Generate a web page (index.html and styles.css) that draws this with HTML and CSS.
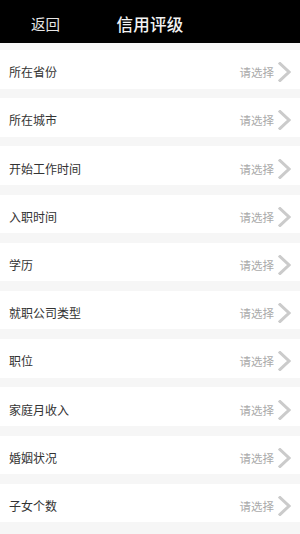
FILE: index.html
```html
<!DOCTYPE html>
<html lang="zh">
<head>
<meta charset="utf-8">
<link rel="stylesheet" href="styles.css">
</head>
<body>
<header class="bar">
  <span class="back">返回</span>
  <span class="title">信用评级</span>
</header>
<ul class="list">
  <li class="row"><span class="label">所在省份</span><span class="pick">请选择<svg class="chev" viewBox="0 0 13 20"><path d="M2 1.5 L11 10 L2 18.5" /></svg></span></li>
  <li class="row"><span class="label">所在城市</span><span class="pick">请选择<svg class="chev" viewBox="0 0 13 20"><path d="M2 1.5 L11 10 L2 18.5" /></svg></span></li>
  <li class="row"><span class="label">开始工作时间</span><span class="pick">请选择<svg class="chev" viewBox="0 0 13 20"><path d="M2 1.5 L11 10 L2 18.5" /></svg></span></li>
  <li class="row"><span class="label">入职时间</span><span class="pick">请选择<svg class="chev" viewBox="0 0 13 20"><path d="M2 1.5 L11 10 L2 18.5" /></svg></span></li>
  <li class="row"><span class="label">学历</span><span class="pick">请选择<svg class="chev" viewBox="0 0 13 20"><path d="M2 1.5 L11 10 L2 18.5" /></svg></span></li>
  <li class="row"><span class="label">就职公司类型</span><span class="pick">请选择<svg class="chev" viewBox="0 0 13 20"><path d="M2 1.5 L11 10 L2 18.5" /></svg></span></li>
  <li class="row"><span class="label">职位</span><span class="pick">请选择<svg class="chev" viewBox="0 0 13 20"><path d="M2 1.5 L11 10 L2 18.5" /></svg></span></li>
  <li class="row"><span class="label">家庭月收入</span><span class="pick">请选择<svg class="chev" viewBox="0 0 13 20"><path d="M2 1.5 L11 10 L2 18.5" /></svg></span></li>
  <li class="row"><span class="label">婚姻状况</span><span class="pick">请选择<svg class="chev" viewBox="0 0 13 20"><path d="M2 1.5 L11 10 L2 18.5" /></svg></span></li>
  <li class="row"><span class="label">子女个数</span><span class="pick">请选择<svg class="chev" viewBox="0 0 13 20"><path d="M2 1.5 L11 10 L2 18.5" /></svg></span></li>
</ul>
</body>
</html>
```
FILE: styles.css
```css
html, body {
  margin: 0;
  padding: 0;
  background: #f6f6f6;
  font-family: "Noto Sans CJK SC", "Noto Sans", sans-serif;
  height: 534px;
  overflow: hidden;
}
.bar {
  height: 43px;
  background: #000;
  color: #fff;
  position: relative;
  display: flex;
  align-items: center;
  justify-content: center;
  padding-top: 4px;
  box-sizing: border-box;
}
.back {
  position: absolute;
  left: 31px;
  top: 12px;
  font-size: 14.5px;
  line-height: 24px;
  color: #e6e6e6;
}
.title {
  font-size: 16.5px;
  font-weight: 500;
  line-height: 24px;
  letter-spacing: 0.2px;
  color: #f4f4f4;
}
.list {
  list-style: none;
  margin: 0;
  padding: 7px 0 0;
  display: flex;
  flex-direction: column;
  gap: 9.7px;
}
.row {
  height: 38.5px;
  background: #fff;
  display: flex;
  align-items: center;
  justify-content: space-between;
  padding: 6px 9px 0 9px;
  box-sizing: border-box;
}
.label {
  font-size: 12px;
  color: #333;
  line-height: 16px;
}
.pick {
  display: flex;
  align-items: center;
  font-size: 11.5px;
  color: #aaa;
  line-height: 16px;
  gap: 4px;
}
.chev {
  width: 13px;
  height: 20px;
  fill: none;
  stroke: #cbcbcb;
  stroke-width: 3;
  stroke-linecap: square;
  stroke-linejoin: miter;
}
```
